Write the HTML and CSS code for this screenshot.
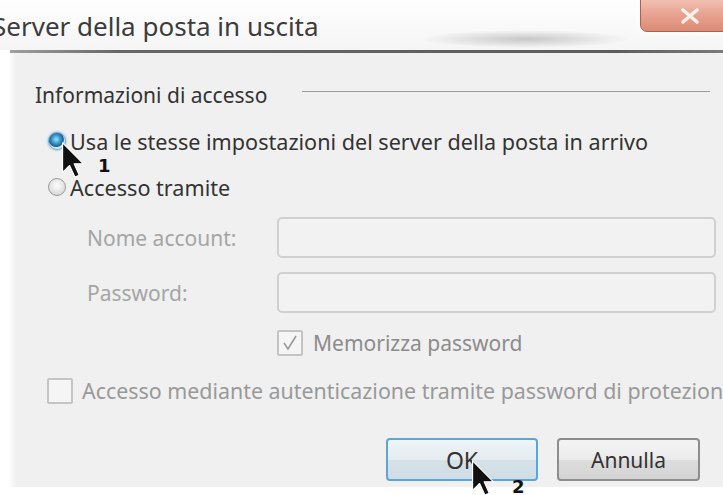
FILE: index.html
```html
<!DOCTYPE html>
<html lang="it">
<head>
<meta charset="utf-8">
<title>Server della posta in uscita</title>
<link rel="stylesheet" href="styles.css">
</head>
<body>
<div class="window">
  <header class="titlebar">
    <span class="title">Server della posta in uscita</span>
    <span class="smudge"></span>
    <button class="close" type="button" aria-label="Chiudi">
      <svg width="20" height="16" viewBox="0 0 20 16"><path d="M3 2 L17 14 M17 2 L3 14" stroke="#fff" stroke-width="3.5" stroke-linecap="round" opacity="0.85"/></svg>
    </button>
  </header>
  <div class="frame-line"></div>
  <main class="dialog">
    <div class="group-head">
      <span class="group-label">Informazioni di accesso</span>
      <span class="group-rule"></span>
    </div>
    <label class="option">
      <span class="radio checked"></span>
      <span>Usa le stesse impostazioni del server della posta in arrivo</span>
    </label>
    <label class="option">
      <span class="radio"></span>
      <span>Accesso tramite</span>
    </label>
    <div class="fields">
      <span class="field-label">Nome account:</span>
      <span class="input"></span>
      <span class="field-label">Password:</span>
      <span class="input"></span>
      <span class="remember">
        <span class="checkbox">
          <svg width="18" height="18" viewBox="0 0 18 18"><path d="M3 9 L7 15 L15 2" fill="none" stroke="#9a9a9a" stroke-width="1.6"/></svg>
        </span>
        <span>Memorizza password</span>
      </span>
    </div>
    <div class="spa-row">
      <span class="checkbox"></span>
      <span>Accesso mediante autenticazione tramite password di protezione</span>
    </div>
    <div class="buttons">
      <button class="btn default" type="button">OK</button>
      <button class="btn" type="button">Annulla</button>
    </div>

    <!-- pointer markers with step numbers -->
    <svg class="pointer p1" width="24" height="36" viewBox="0 0 12 19"><path d="M0.5 0.5 L0.5 16 L4.2 12.4 L7 18.5 L9.3 17.5 L6.6 11.5 L11.5 11.5 Z" fill="#111" stroke="#fff" stroke-width="0.6" stroke-linejoin="round"/></svg>
    <span class="step s1">1</span>
    <svg class="pointer p2" width="24" height="36" viewBox="0 0 12 19"><path d="M0.5 0.5 L0.5 16 L4.2 12.4 L7 18.5 L9.3 17.5 L6.6 11.5 L11.5 11.5 Z" fill="#111" stroke="#fff" stroke-width="0.6" stroke-linejoin="round"/></svg>
    <span class="step s2">2</span>
  </main>
</div>
</body>
</html>
```

FILE: styles.css
```css
* { box-sizing: border-box; }

html, body {
  margin: 0;
  padding: 0;
  background: #fff;
}

body {
  width: 723px;
  height: 495px;
  overflow: hidden;
  font-family: "Noto Sans", "Open Sans", sans-serif;
  color: #333;
}

.window {
  width: 723px;
  height: 495px;
  background: #fff;
}

/* ---- title bar ---- */
.titlebar {
  position: relative;
  height: 50px;
  display: flex;
  align-items: flex-start;
  overflow: hidden;
  background: linear-gradient(#fefefe, #f5f5f5);
}

.title {
  margin: 10px 0 0 -8px;
  font-size: 26px;
  line-height: 32px;
  color: #3c3c3c;
  white-space: nowrap;
}

.smudge {
  position: absolute;
  left: 420px;
  top: 30px;
  width: 210px;
  height: 18px;
  background: radial-gradient(ellipse at center, rgba(110,110,110,.35), rgba(110,110,110,0) 70%);
}

.close {
  margin: -6px -17px 0 auto;
  width: 100px;
  height: 38px;
  padding: 6px 0 0;
  display: flex;
  align-items: center;
  justify-content: center;
  border: 1px solid #b0604f;
  border-radius: 0 0 0 7px;
  background: linear-gradient(#f5cabd, #e9a593 50%, #dc8b75);
  box-shadow: 0 0 4px 2px rgba(255,255,255,.9);
}

.frame-line {
  height: 3px;
  margin-left: 10px;
  background: linear-gradient(90deg, #a0a0a0, #676767 15%, #5d5d5d 85%, #7a7a7a);
}

/* ---- dialog body ---- */
.dialog {
  position: relative;
  margin-left: 10px;
  height: 434px;
  padding: 23px 7px 0 0;
  background: linear-gradient(90deg, #fbfbfb, #f0f0f0 6px);
  font-size: 21px;
}

.group-head {
  display: flex;
  align-items: center;
  height: 38px;
  padding-left: 25px;
  margin-bottom: 4px;
}

.group-rule {
  flex: 1;
  height: 1px;
  margin: -8px 6px 0 35px;
  background: #9c9c9c;
}

.option {
  display: flex;
  align-items: center;
  gap: 4px;
  height: 46px;
  padding-left: 38px;
  font-size: 21.6px;
  white-space: nowrap;
}

.radio {
  flex: none;
  width: 18px;
  height: 18px;
  border-radius: 50%;
  border: 1px solid #9a9a9a;
  background: radial-gradient(circle at 50% 40%, #fdfdfd, #dcdcdc 70%, #c9c9c9);
}

.radio.checked {
  border-color: #7aa5c2;
  background: radial-gradient(circle at 45% 40%, #9fe0f8 0, #3a9ed3 30%, #1f5f93 55%, #cfe6f3 62%, #e9f3f9 80%);
  box-shadow: 0 0 2px 1px rgba(140,190,220,.6);
}

.fields {
  display: grid;
  grid-template-columns: 190px 1fr;
  row-gap: 14px;
  align-items: center;
  margin: 7px 0 0 77px;
  color: #a5a5a5;
}

.input {
  height: 41px;
  border: 2px solid #d0d0d0;
  border-radius: 5px;
  background: #f2f2f2;
}

.remember {
  grid-column: 2;
  display: flex;
  align-items: center;
  gap: 10px;
  margin-top: 2px;
  color: #8c8c8c;
}

.checkbox {
  flex: none;
  width: 26px;
  height: 26px;
  display: flex;
  align-items: center;
  justify-content: center;
  border: 2px solid #c4c4c4;
  border-radius: 2px;
  background: #f5f5f5;
}

.spa-row {
  display: flex;
  align-items: center;
  gap: 9px;
  margin-top: 19px;
  padding-left: 37px;
  font-size: 21.4px;
  white-space: nowrap;
  color: #999;
}

.buttons {
  display: flex;
  justify-content: flex-end;
  gap: 19px;
  margin-top: 33px;
  padding-right: 16px;
}

.btn {
  width: 143px;
  height: 43px;
  font: inherit;
  font-size: 21px;
  color: #333;
  border: 2px solid #8d8d8d;
  border-radius: 4px;
  background: linear-gradient(#f4f4f4, #ebebeb 50%, #dddddd 52%, #d3d3d3);
}

.btn.default {
  width: 152px;
  font-size: 23px;
  border-color: #5aa6d4;
  background: linear-gradient(#eef4f7, #e4ecf0 50%, #d6e1e7 52%, #cfdde6);
}

/* ---- pointers over the form ---- */
.pointer {
  position: absolute;
}

.p1 { left: 51px; top: 89px; }
.p2 { left: 461px; top: 407px; }

.step {
  position: absolute;
  font-family: "DejaVu Sans", sans-serif;
  font-weight: bold;
  font-size: 18px;
  line-height: 1;
  color: #111;
}

.s1 { left: 88px; top: 104px; }
.s2 { left: 502px; top: 425px; }
```
